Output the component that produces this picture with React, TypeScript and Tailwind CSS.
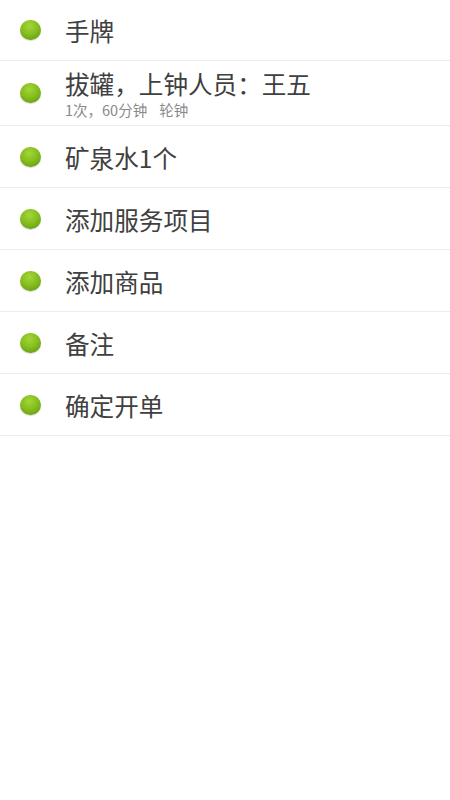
import React from "react";

const Dot = () => (
  <div className="w-[21px] h-[20px] shrink-0 rounded-full bg-[radial-gradient(circle_at_45%_30%,#a4d53a_0%,#86bf1f_45%,#5c920c_100%)] shadow-[0_1px_1px_rgba(0,0,0,0.15)]" />
);

const items = ["矿泉水1个", "添加服务项目", "添加商品", "备注", "确定开单"];

export default function App() {
  return (
    <div
      className="w-[450px] min-h-[800px] bg-white text-[#404040]"
      style={{ fontFamily: '"Noto Sans CJK SC", "Noto Sans", sans-serif' }}
    >
      <div className="flex h-[61px] items-center border-b border-[#ececec] pl-[20px]">
        <Dot />
        <span className="ml-[24px] text-[24.6px] leading-[30px]">手牌</span>
      </div>
      <div className="flex h-[65px] items-center border-b border-[#ececec] pl-[20px]">
        <Dot />
        <div className="ml-[24px] flex flex-col">
          <span className="text-[24.6px] leading-[30px]">拔罐，上钟人员：王五</span>
          <div className="mt-[3px] flex text-[14.5px] leading-[17px] text-[#8a8a8a]">
            <span>1次，60分钟</span>
            <span className="ml-[12px]">轮钟</span>
          </div>
        </div>
      </div>
      {items.map((t) => (
        <div
          key={t}
          className="flex h-[62px] items-center border-b border-[#ececec] pl-[20px]"
        >
          <Dot />
          <span className="ml-[24px] text-[24.6px] leading-[30px]">{t}</span>
        </div>
      ))}
    </div>
  );
}
